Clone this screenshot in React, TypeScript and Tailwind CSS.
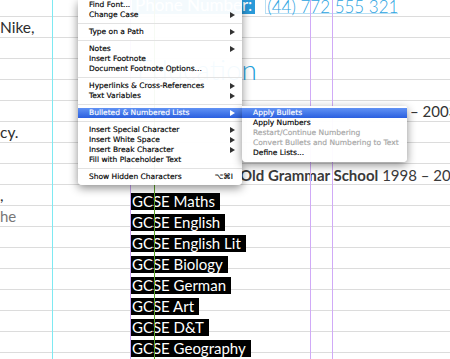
type Entry = { label: string; arrow?: boolean; active?: boolean; disabled?: boolean; shortcut?: string } | 'sep'

const mainMenu: Entry[] = [
  { label: 'Find Font...' },
  { label: 'Change Case', arrow: true },
  'sep',
  { label: 'Type on a Path', arrow: true },
  'sep',
  { label: 'Notes', arrow: true },
  { label: 'Insert Footnote' },
  { label: 'Document Footnote Options...' },
  'sep',
  { label: 'Hyperlinks & Cross-References', arrow: true },
  { label: 'Text Variables', arrow: true },
  'sep',
  { label: 'Bulleted & Numbered Lists', arrow: true, active: true },
  'sep',
  { label: 'Insert Special Character', arrow: true },
  { label: 'Insert White Space', arrow: true },
  { label: 'Insert Break Character', arrow: true },
  { label: 'Fill with Placeholder Text' },
  'sep',
  { label: 'Show Hidden Characters', shortcut: '⌥⌘I' },
]

const subMenu: Entry[] = [
  { label: 'Apply Bullets', active: true },
  { label: 'Apply Numbers' },
  { label: 'Restart/Continue Numbering', disabled: true },
  { label: 'Convert Bullets and Numbering to Text', disabled: true },
  { label: 'Define Lists...' },
]

const subjects = [
  'GCSE Maths',
  'GCSE English',
  'GCSE English Lit',
  'GCSE Biology',
  'GCSE German',
  'GCSE Art',
  'GCSE D&T',
  'GCSE Geography',
]

// rows of the baseline grid, starting at the line y=37
const leftRows: (string | null)[] = ['Nike,', null, null, null, null, 'cy.', null, null, ',', 'he']

function Arrow({ white }: { white?: boolean }) {
  return (
    <svg width="5" height="6" viewBox="0 0 5 6" className="shrink-0">
      <polygon points="0,0 5,3 0,6" fill={white ? '#fff' : '#333'} />
    </svg>
  )
}

function MenuList({ items }: { items: Entry[] }) {
  return (
    <>
      {items.map((item, i) =>
        item === 'sep' ? (
          <div key={i} className="h-[7px] pt-[3px]">
            <div className="h-px bg-[#e2e2e2]" />
          </div>
        ) : (
          <div
            key={i}
            className={`flex h-[10px] items-center justify-between pl-[11px] pr-[7px] leading-none ${
              item.active
                ? 'bg-linear-to-b from-[#6192f4] to-[#2b5fdf] text-white'
                : item.disabled
                  ? 'text-[#a5a5a5]'
                  : 'text-black'
            }`}
          >
            <span className="whitespace-nowrap">{item.label}</span>
            {item.arrow && <Arrow white={item.active} />}
            {item.shortcut && <span className="mr-[2px]">{item.shortcut}</span>}
          </div>
        ),
      )}
    </>
  )
}

export default function App() {
  return (
    <div className="relative h-[359px] w-[450px] overflow-hidden bg-white font-['Lato',sans-serif] text-[#333]">
      {/* baseline grid */}
      <div className="absolute inset-0 flex flex-col gap-[20px] pt-[16px]">
        {Array.from({ length: 17 }, (_, i) => (
          <div key={i} className="h-px shrink-0 bg-[#dcdcdc]" />
        ))}
      </div>

      <div className="relative flex flex-col">
        {/* contact line */}
        <div className="-mt-[6px] flex h-[20px] items-start gap-[10px] pl-[132px]">
          <div className="h-[20px] whitespace-nowrap bg-[#2a9ad9] px-[3px] text-[17px] leading-[22px] text-white">
            Phone Number:
          </div>
          <div className="h-[20px] whitespace-nowrap border-b border-l border-[#b9dff3] pl-px pt-[4px] text-[17px] font-light leading-none text-[#2ba3df]">
            (44) 772 555 321
          </div>
        </div>

        <div className="flex">
          {/* left body text frame */}
          <div className="mt-[3px] flex w-[131px] shrink-0 flex-col text-[15.5px] text-[#2e2e2e]">
            {leftRows.map((t, i) => (
              <div key={i} className={`h-[21px] leading-[21px] ${t === 'he' ? 'text-[15px] text-[#777]' : ''}`}>
                {t}
              </div>
            ))}
          </div>

          {/* selected list */}
          <div className="flex w-[109px] shrink-0 flex-col items-start gap-[4px] pt-[179px]">
            {subjects.map((s) => (
              <span
                key={s}
                className="h-[17px] whitespace-nowrap bg-black pl-px pr-[5px] text-[15px] leading-[17px] text-white"
              >
                {s}
              </span>
            ))}
          </div>

          {/* right text frame */}
          <div className="mt-[3px] flex flex-col whitespace-nowrap text-[15px] text-[#3a3a3a]">
            <div className="h-[21px]" />
            <div className="h-[21px]" />
            <div className="-ml-[110px] h-[21px] w-[127px] text-right text-[28px] font-light leading-[21px] text-[#1fa1dc]">
              Education
            </div>
            <div className="h-[21px]" />
            <div className="h-[21px] pl-[170px] leading-[21px] text-[#333]">– 2003</div>
            <div className="h-[21px]" />
            <div className="h-[21px]" />
            <div className="h-[21px] leading-[23px]">
              <span className="font-bold">Old Grammar School</span> 1998 – 2003
            </div>
          </div>
        </div>
      </div>

      {/* guides */}
      <div className="pointer-events-none absolute inset-0 flex pl-[52px]">
        <div className="w-px bg-[#7ee9f2]" />
        <div className="ml-[77px] w-px bg-[#c8a2f0]" />
        <div className="ml-[23px] w-px bg-[#5aa028]" />
        <div className="ml-[155px] w-px bg-[#d0aaf7]" />
        <div className="ml-[21px] w-px bg-[#d0aaf7]" />
      </div>

      {/* context menu */}
      <div className="absolute left-[78px] top-0 w-[164px] rounded-b-[4px] bg-white/95 pb-[3px] font-['DejaVu_Sans',sans-serif] text-[7.5px] shadow-[0_3px_10px_rgba(0,0,0,0.45)] [-webkit-text-stroke:0.15px]">
        <MenuList items={mainMenu} />
      </div>

      {/* submenu */}
      <div className="absolute left-[242px] top-[106px] w-[165px] rounded-b-[4px] rounded-tr-[2px] bg-white/95 pb-[4px] pt-[2px] font-['DejaVu_Sans',sans-serif] text-[7.5px] shadow-[0_3px_10px_rgba(0,0,0,0.45)] [-webkit-text-stroke:0.15px]">
        <MenuList items={subMenu} />
      </div>
    </div>
  )
}
